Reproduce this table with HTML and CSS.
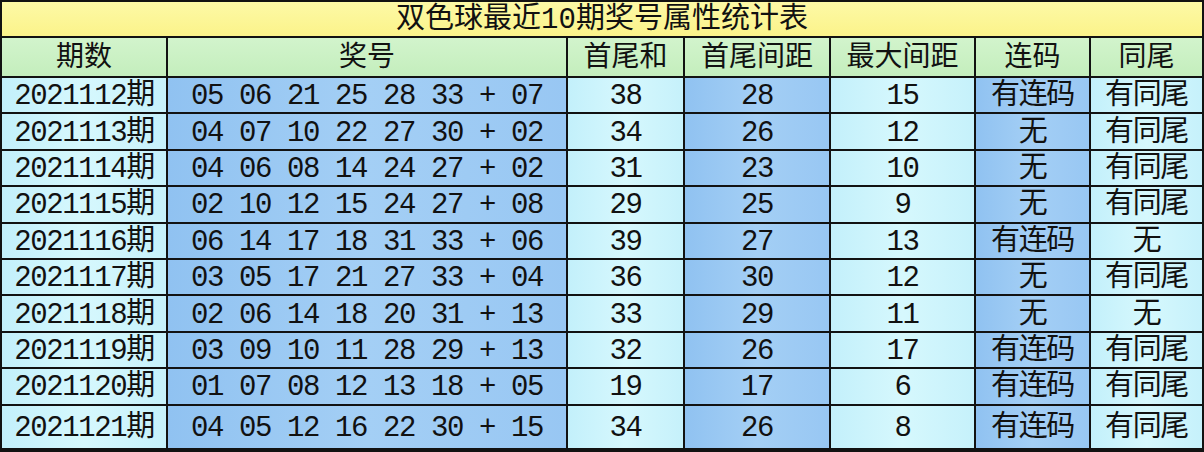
FILE: index.html
```html
<!DOCTYPE html>
<html lang="zh-CN">
<head>
<meta charset="utf-8">
<title>双色球最近10期奖号属性统计表</title>
<link rel="stylesheet" href="styles.css">
</head>
<body>
<div class="sheet">
  <div class="title">双色球最近10期奖号属性统计表</div>

  <div class="hd">期数</div><div class="hd">奖号</div><div class="hd">首尾和</div><div class="hd">首尾间距</div><div class="hd">最大间距</div><div class="hd">连码</div><div class="hd">同尾</div>

  <div class="lt">2021112期</div><div class="bl">05 06 21 25 28 33 + 07</div><div class="lt">38</div><div class="bl">28</div><div class="lt">15</div><div class="bl">有连码</div><div class="lt">有同尾</div>
  <div class="lt">2021113期</div><div class="bl">04 07 10 22 27 30 + 02</div><div class="lt">34</div><div class="bl">26</div><div class="lt">12</div><div class="bl">无</div><div class="lt">有同尾</div>
  <div class="lt">2021114期</div><div class="bl">04 06 08 14 24 27 + 02</div><div class="lt">31</div><div class="bl">23</div><div class="lt">10</div><div class="bl">无</div><div class="lt">有同尾</div>
  <div class="lt">2021115期</div><div class="bl">02 10 12 15 24 27 + 08</div><div class="lt">29</div><div class="bl">25</div><div class="lt">9</div><div class="bl">无</div><div class="lt">有同尾</div>
  <div class="lt">2021116期</div><div class="bl">06 14 17 18 31 33 + 06</div><div class="lt">39</div><div class="bl">27</div><div class="lt">13</div><div class="bl">有连码</div><div class="lt">无</div>
  <div class="lt">2021117期</div><div class="bl">03 05 17 21 27 33 + 04</div><div class="lt">36</div><div class="bl">30</div><div class="lt">12</div><div class="bl">无</div><div class="lt">有同尾</div>
  <div class="lt">2021118期</div><div class="bl">02 06 14 18 20 31 + 13</div><div class="lt">33</div><div class="bl">29</div><div class="lt">11</div><div class="bl">无</div><div class="lt">无</div>
  <div class="lt">2021119期</div><div class="bl">03 09 10 11 28 29 + 13</div><div class="lt">32</div><div class="bl">26</div><div class="lt">17</div><div class="bl">有连码</div><div class="lt">有同尾</div>
  <div class="lt">2021120期</div><div class="bl">01 07 08 12 13 18 + 05</div><div class="lt">19</div><div class="bl">17</div><div class="lt">6</div><div class="bl">有连码</div><div class="lt">有同尾</div>
  <div class="lt">2021121期</div><div class="bl">04 05 12 16 22 30 + 15</div><div class="lt">34</div><div class="bl">26</div><div class="lt">8</div><div class="bl">有连码</div><div class="lt">有同尾</div>
</div>
</body>
</html>
```

FILE: styles.css
```css
html, body {
  margin: 0;
  padding: 0;
  background: #ffffff;
}

.sheet {
  width: 1204px;
  height: 452px;
  box-sizing: border-box;
  display: grid;
  grid-template-columns: 164px 398px 115px 144px 143px 113px 111px;
  grid-template-rows: 34px 38px repeat(9, 34.4px) 42px;
  gap: 2px;
  padding: 2px 2px 3px 2px;
  background: #121212;
  font-family: "Liberation Mono", "Noto Sans CJK SC", monospace;
  font-size: 27px;
  color: #111111;
}

.sheet > div {
  display: flex;
  align-items: center;
  justify-content: center;
  white-space: pre;
  line-height: 1;
  padding-top: 3px;
  box-sizing: border-box;
}

.title {
  grid-column: 1 / -1;
  background: linear-gradient(180deg, #fdf9a6 0%, #fbf38a 100%);
  font-size: 29px;
}

.hd {
  background: linear-gradient(180deg, #d2f4cc 0%, #c4eebd 100%);
  font-size: 28px;
}

.lt,
.bl {
  font-size: 29px;
  letter-spacing: -1.4px;
}

.lt {
  background: linear-gradient(90deg, #c3f0fb 0%, #d6f8fd 50%, #c6f1fb 100%);
}

.bl {
  background: linear-gradient(90deg, #90c2f1 0%, #a4cff5 50%, #98c7f3 100%);
}
```
